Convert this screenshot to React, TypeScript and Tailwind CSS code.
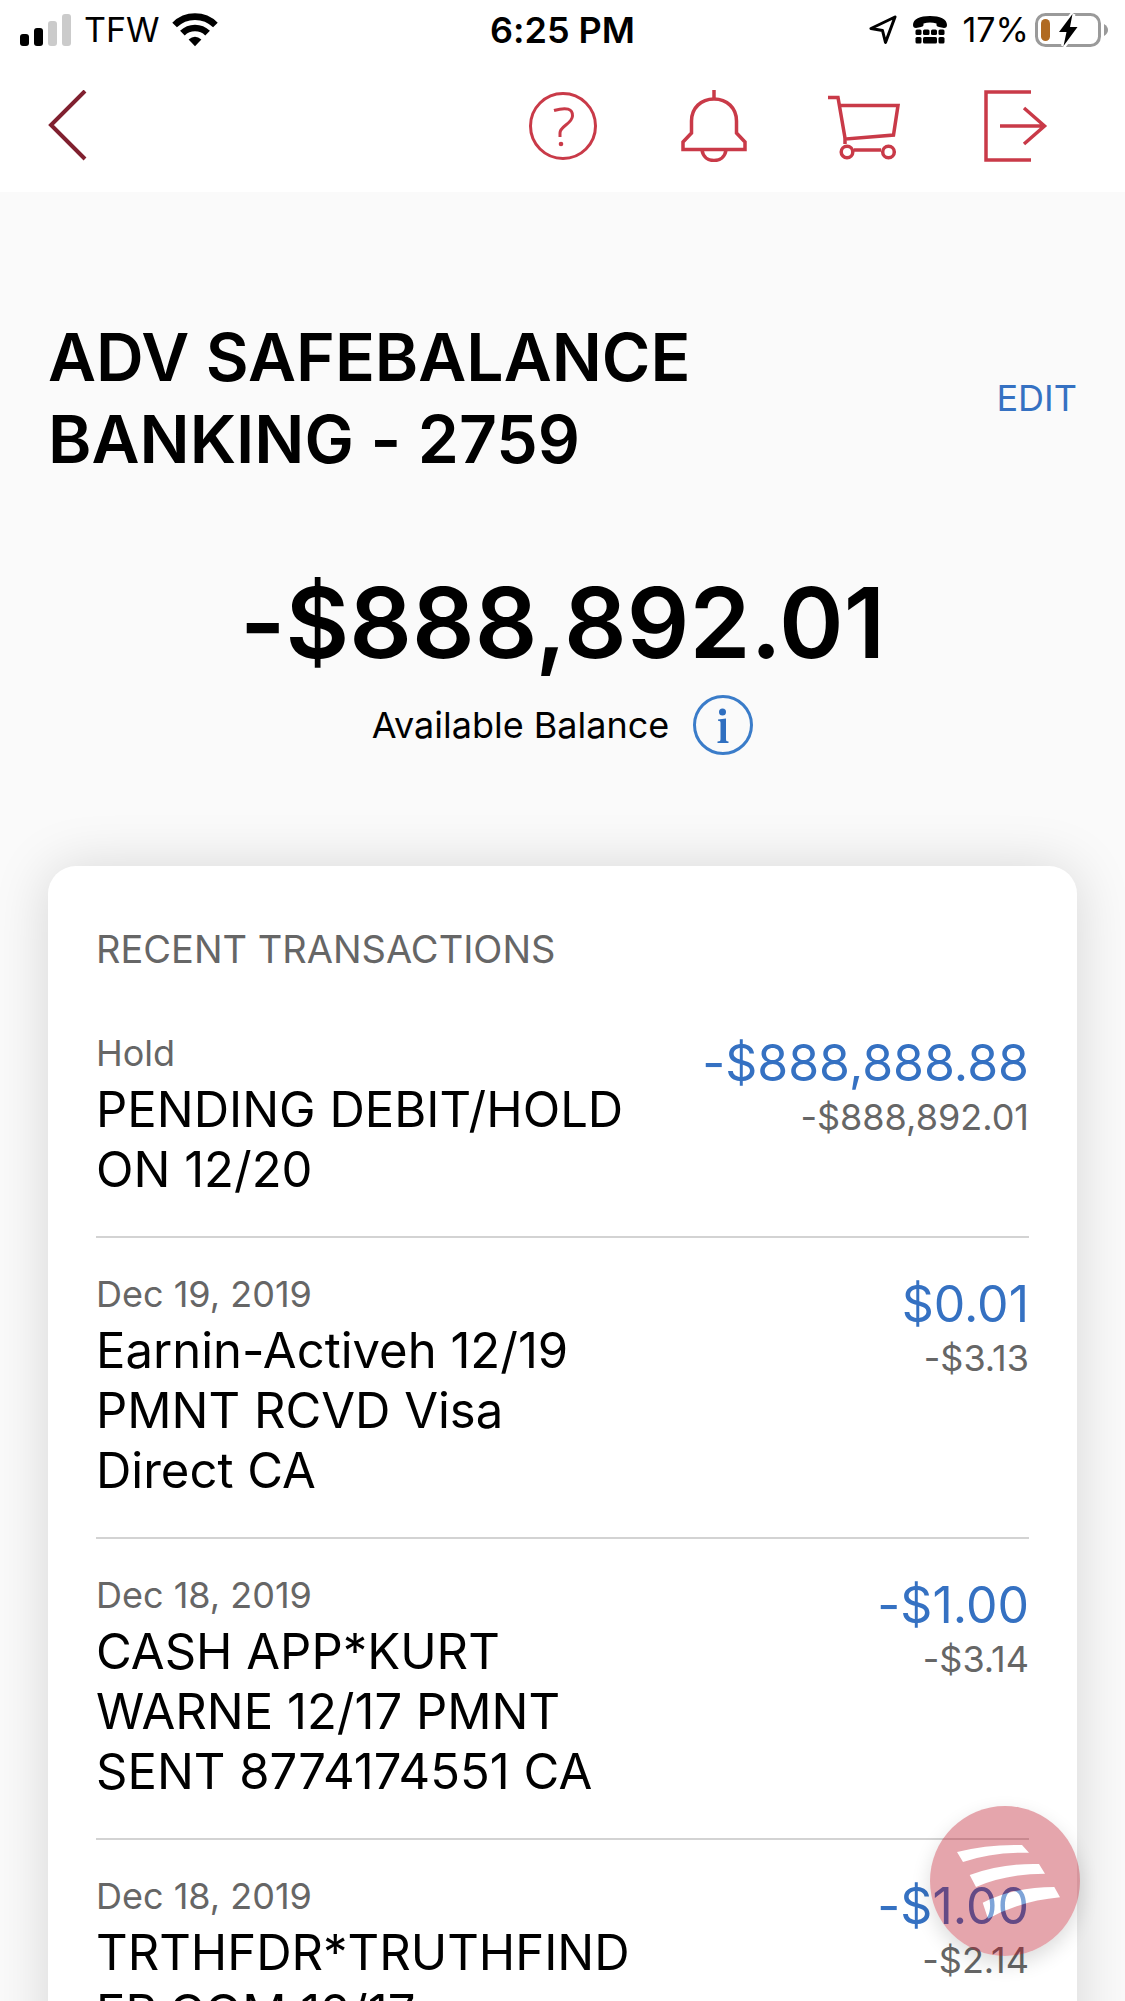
import { ReactNode } from 'react'

interface Transaction {
  id: number
  date: string
  description: string
  amount: string
  balance: string
}

const transactions: Transaction[] = [
  {
    id: 1,
    date: 'Hold',
    description: 'PENDING DEBIT/HOLD\nON 12/20',
    amount: '-$888,888.88',
    balance: '-$888,892.01',
  },
  {
    id: 2,
    date: 'Dec 19, 2019',
    description: 'Earnin-Activeh 12/19\nPMNT RCVD Visa\nDirect CA',
    amount: '$0.01',
    balance: '-$3.13',
  },
  {
    id: 3,
    date: 'Dec 18, 2019',
    description: 'CASH APP*KURT\nWARNE 12/17 PMNT\nSENT 8774174551 CA',
    amount: '-$1.00',
    balance: '-$3.14',
  },
  {
    id: 4,
    date: 'Dec 18, 2019',
    description: 'TRTHFDR*TRUTHFIND\nER.COM 12/17',
    amount: '-$1.00',
    balance: '-$2.14',
  },
]

// ── Status bar ──
function SignalIcon() {
  return (
    <svg width="52" height="34" viewBox="0 0 52 34" aria-hidden="true">
      <rect x="0" y="21" width="9" height="12" rx="3" />
      <rect x="14" y="15" width="9" height="18" rx="3" />
      <rect x="28" y="8" width="9" height="25" rx="3" fill="#cbcbcb" />
      <rect x="42" y="1" width="9" height="32" rx="3" fill="#cbcbcb" />
    </svg>
  )
}

function WifiIcon() {
  return (
    <svg width="46" height="34" viewBox="0 0 46 34" aria-hidden="true">
      <g fill="none" stroke="#000" strokeWidth="6.6">
        <path d="M2.6 12A29 29 0 0 1 43.4 12" />
        <path d="M10.4 20.2A18 18 0 0 1 35.6 20.2" />
      </g>
      <path d="M16.6 26.6Q23 21 29.4 26.6L23 33.2Z" />
    </svg>
  )
}

function LocationIcon() {
  return (
    <svg width="28" height="30" viewBox="0 0 28 30" fill="none" stroke="#000" strokeWidth="3" strokeLinejoin="round" aria-hidden="true">
      <path d="M26 2L2 13.5L13.5 15.5L16.5 27.5Z" />
    </svg>
  )
}

function TtyIcon() {
  return (
    <svg width="34" height="28" viewBox="0 0 34 28" aria-hidden="true">
      <path d="M0 9C0 3 7 0 17 0S34 3 34 9C34 11 33 12 31 12L26 11C24 10.500 23.500 10 23.500 8.500V7.500Q17 5.500 10.500 7.500V8.500C10.500 10 10 10.500 8 11L3 12C1 12 0 11 0 9Z" />
      <rect x="2.500" y="13.500" width="6" height="5.500" rx="1.500" />
      <rect x="10" y="13.500" width="6.500" height="5.500" rx="1.500" />
      <rect x="18" y="13.500" width="6" height="5.500" rx="1.500" />
      <rect x="25.500" y="13.500" width="6" height="5.500" rx="1.500" />
      <rect x="2.500" y="21" width="6" height="6.500" rx="1.500" />
      <rect x="10" y="21" width="14" height="6.500" rx="1.500" />
      <rect x="25.500" y="21" width="6" height="6.500" rx="1.500" />
    </svg>
  )
}

function BatteryIcon() {
  return (
    <svg width="74" height="34" viewBox="0 0 74 34" aria-hidden="true">
      <rect x="1.500" y="1.500" width="63" height="31" rx="9" fill="none" stroke="#9a9a9a" strokeWidth="3" />
      <path d="M69 11Q73 13.500 73 17T69 23Z" fill="#9a9a9a" />
      <rect x="6" y="6" width="9" height="22" rx="4.500" fill="#b06a22" />
      <path d="M38 1L24 18.500H31L28.500 33L42.500 14H35Z" stroke="#fff" strokeWidth="5" />
      <path d="M37.500 1L24 19H31.500L28.500 33L42.500 14H35Z" />
    </svg>
  )
}

function StatusBar() {
  return (
    <div className="grid h-[60px] grid-cols-[1fr_auto_1fr] items-center bg-white px-4 text-[34px] leading-[40px]">
      <div className="flex items-center gap-3 pl-1">
        <SignalIcon />
        <span>TFW</span>
        <WifiIcon />
      </div>
      <time className="text-[36px] font-semibold">6:25 PM</time>
      <div className="flex items-center justify-end gap-1.5">
        <div className="flex items-center gap-4">
          <LocationIcon />
          <TtyIcon />
          <span>17%</span>
        </div>
        <BatteryIcon />
      </div>
    </div>
  )
}

// ── Navigation ──
function NavButton({ label, children }: { label: string; children: ReactNode }) {
  return (
    <button type="button" aria-label={label} className="size-[72px]">
      <svg width="72" height="72" viewBox="0 0 72 72" fill="none" stroke="#c93a48" strokeWidth="3.500">
        {children}
      </svg>
    </button>
  )
}

function NavBar() {
  return (
    <header className="flex h-[132px] items-center justify-between bg-white pr-[74px] pl-12">
      <button type="button" aria-label="Back">
        <svg width="40" height="72" viewBox="0 0 40 72" fill="none" stroke="#80202f" strokeWidth="4">
          <path d="M37 1L3 35L37 69" />
        </svg>
      </button>
      <nav className="flex gap-[79px]">
        <NavButton label="Help">
          <circle cx="37" cy="36" r="32.500" strokeWidth="3" />
          <path d="M28 20.500Q47 15 46.500 26C46 34 34 36 34 43V47" strokeWidth="3" />
          <circle cx="35" cy="54" r="2.300" fill="#c93a48" stroke="none" />
        </NavButton>
        <NavButton label="Alerts">
          <path d="M37 0V9" />
          <path d="M37 9C24 9 14.500 18 14.500 31V43L6 52V59.500H68V52L59.500 43V31C59.500 18 50 9 37 9Z" />
          <path d="M25 60C26 67 31 70.500 37 70.500S48 67 49 60" />
        </NavButton>
        <NavButton label="Shop">
          <path d="M0 7.500H10L17 48" />
          <path d="M11.500 15.500H70L65.500 45L17 49V54" />
          <path d="M26 60H53" />
          <circle cx="19" cy="62" r="5.800" />
          <circle cx="60.500" cy="62" r="5.800" />
        </NavButton>
        <NavButton label="Sign out">
          <path d="M52 2H7V70H52M21 36H66M45 18L65.500 36L45 54" />
        </NavButton>
      </nav>
    </header>
  )
}

function InfoIcon() {
  return (
    <svg width="60" height="60" viewBox="0 0 60 60" fill="#2f6fc0" aria-hidden="true">
      <circle cx="30" cy="30" r="28.500" fill="none" stroke="#3a7cc9" strokeWidth="3" />
      <circle cx="29.500" cy="17" r="3.500" />
      <path d="M25 24.500L33 23.500V44C33 46 33.500 46.300 35.500 46.500V48H24.500V46.500C27 46.300 27.500 46 27.500 44V28C27.500 26.300 27 26 25 25.800Z" />
    </svg>
  )
}

function TransactionRow({ item }: { item: Transaction }) {
  return (
    <li className="flex justify-between border-b-2 border-[#d3d3d3] pt-[34px] pb-9">
      <div>
        <p className="text-[36px] leading-[44px] text-[#666666]">{item.date}</p>
        <p className="mt-[5px] text-[49px] leading-[60px] whitespace-pre-line">{item.description}</p>
      </div>
      <div className="text-right">
        <a href="#" className="block text-[50px] leading-[64px] text-[#3571c2]">
          {item.amount}
        </a>
        <p className="text-[36px] leading-[44px] text-[#666666]">{item.balance}</p>
      </div>
    </li>
  )
}

function AssistantButton() {
  return (
    <button
      type="button"
      aria-label="Open assistant"
      className="absolute right-[45px] bottom-[45px] size-[150px] rounded-full shadow-[0_8px_20px_rgba(0,0,0,0.14)]"
    >
      <svg width="150" height="150" viewBox="0 0 150 150" className="opacity-36" aria-hidden="true">
        <circle cx="75" cy="75" r="75" fill="#b9081b" />
        <g fill="#fff">
          <path d="M27 46Q58 38 92 39L99 46.700Q62 46 33 56Z" />
          <path d="M39.700 69Q72 57 109 58L115 67.700Q76 68 46 81Z" />
          <path d="M52.700 96.700Q84 81 124.300 81L130 91.300Q90 95 58 112.700Z" />
        </g>
      </svg>
    </button>
  )
}

export default function App() {
  return (
    <div className="relative flex h-screen flex-col bg-[#fafafa] font-['Inter',sans-serif] text-black [font-feature-settings:'calt'_0]">
      <StatusBar />
      <NavBar />

      <main className="flex-1 overflow-y-auto px-12 [scrollbar-width:none]">
        {/* Account summary */}
        <section className="pt-[124px]">
          <div className="flex items-center justify-between gap-8">
            <h1 className="text-[66px] leading-[82px] font-semibold">
              ADV SAFEBALANCE
              <br />
              BANKING - 2759
            </h1>
            <button type="button" className="text-[36px] leading-[44px] text-[#3571c2]">
              EDIT
            </button>
          </div>
          <p className="mt-[85px] text-center text-[98px] leading-[116px] font-semibold">-$888,892.01</p>
          <div className="mt-[14px] flex items-center justify-center gap-6">
            <span className="text-[36px] leading-[44px]">Available Balance</span>
            <button type="button" aria-label="About available balance">
              <InfoIcon />
            </button>
          </div>
        </section>

        {/* Recent transactions */}
        <section className="mt-[111px] rounded-[28px] bg-white px-12 pt-[60px] shadow-[0_2px_56px_rgba(0,0,0,0.15)]">
          <h2 className="text-[38px] leading-[46px] text-[#666666]">RECENT TRANSACTIONS</h2>
          <ul className="mt-[25px]">
            {transactions.map((item) => (
              <TransactionRow key={item.id} item={item} />
            ))}
          </ul>
        </section>
      </main>

      <AssistantButton />
    </div>
  )
}
